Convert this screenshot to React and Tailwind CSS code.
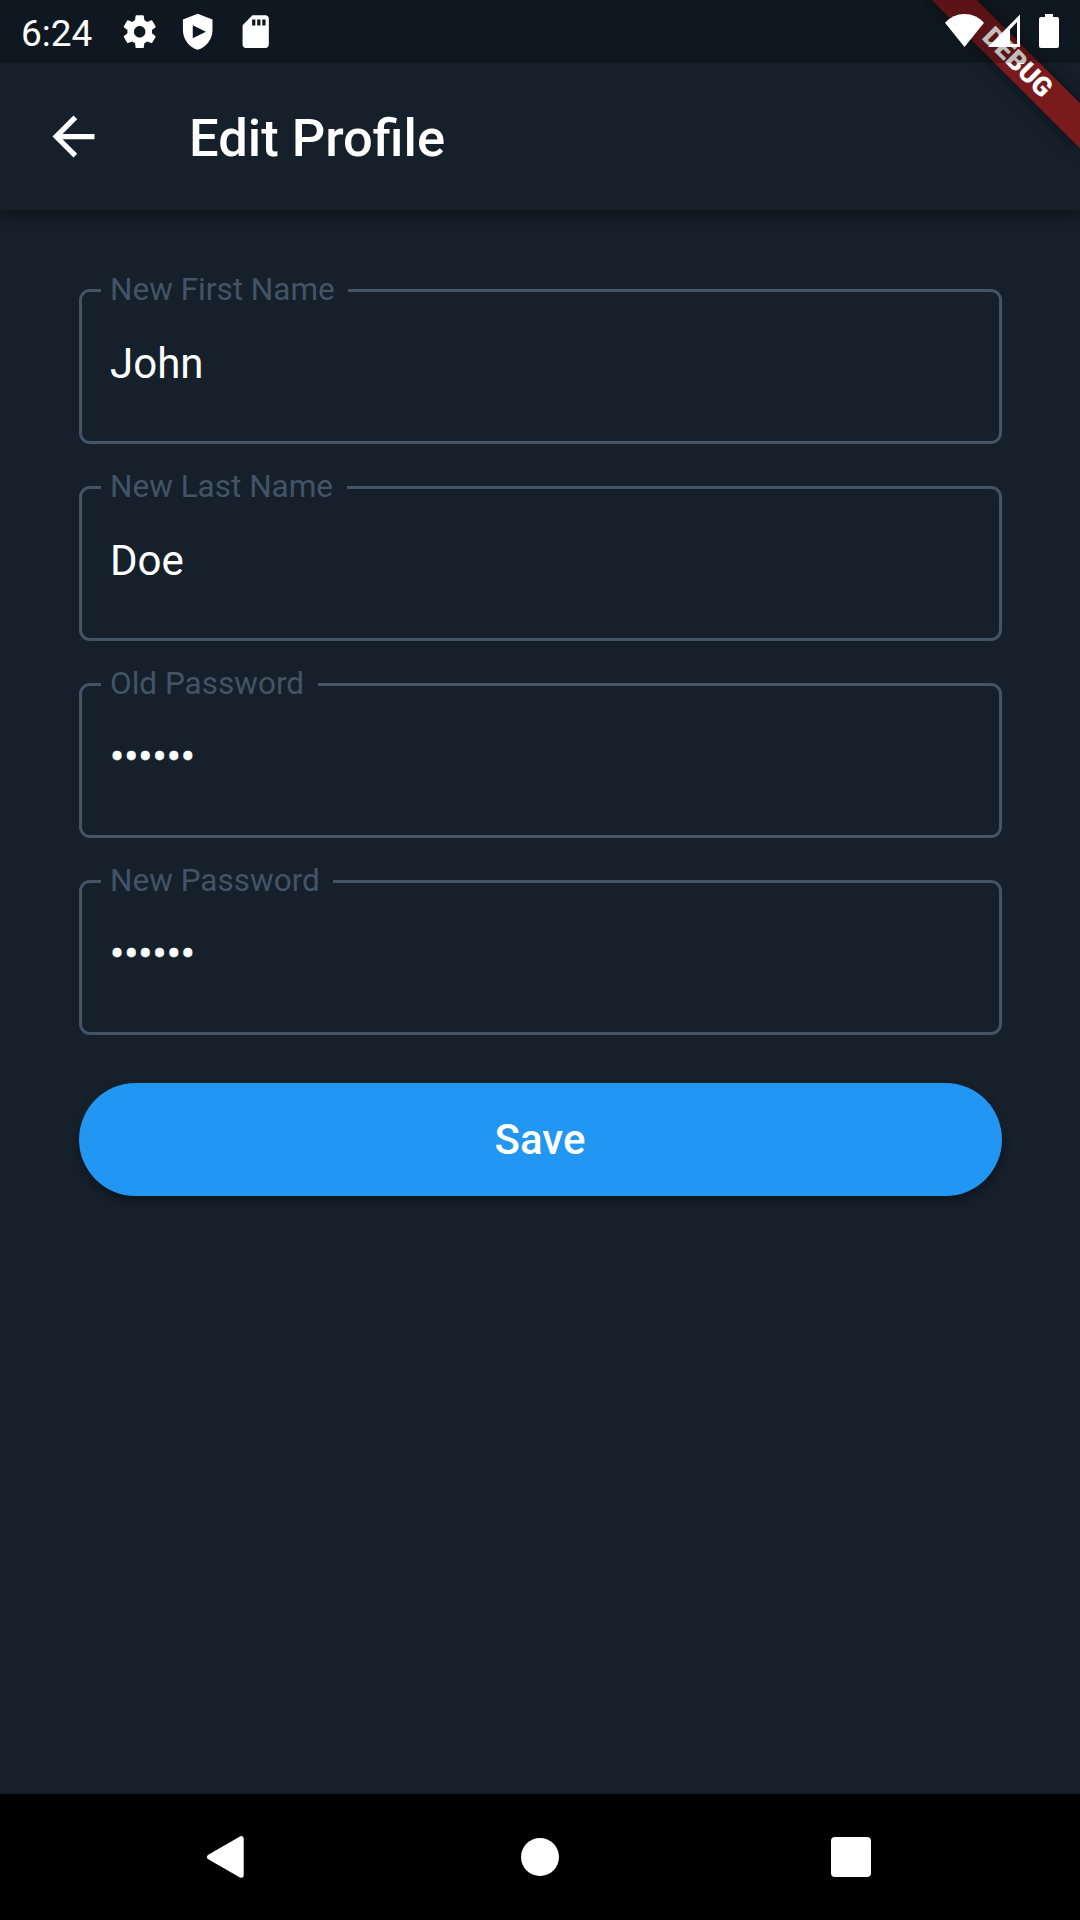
import React from "react";

const fields = [
  { label: "New First Name", value: "John" },
  { label: "New Last Name", value: "Doe" },
  { label: "Old Password", value: "••••••", secret: true },
  { label: "New Password", value: "••••••", secret: true },
];

function StatusIcon({ d, className = "" }) {
  return (
    <svg viewBox="0 0 24 24" fill="currentColor" className={`h-[39.4px] w-[39.4px] ${className}`}>
      <path fillRule="evenodd" d={d} />
    </svg>
  );
}

function StatusBar() {
  return (
    <div className="absolute inset-x-0 top-0 z-20 flex h-[63px] items-center bg-black/25 pl-[21px] pr-[19px]">
      <span className="relative top-[2px] w-[99px] text-[37px] leading-none">6:24</span>
      <StatusIcon d="M19.43 12.98c.04-.32.07-.64.07-.98s-.03-.66-.07-.98l2.11-1.65c.19-.15.24-.42.12-.64l-2-3.46c-.12-.22-.39-.3-.61-.22l-2.49 1c-.52-.4-1.08-.73-1.69-.98l-.38-2.65C14.46 2.18 14.25 2 14 2h-4c-.25 0-.46.18-.49.42l-.38 2.65c-.61.25-1.17.59-1.69.98l-2.49-1c-.23-.09-.49 0-.61.22l-2 3.46c-.13.22-.07.49.12.64l2.11 1.65c-.04.32-.07.65-.07.98s.03.66.07.98l-2.11 1.65c-.19.15-.24.42-.12.64l2 3.46c.12.22.39.3.61.22l2.49-1c.52.4 1.08.73 1.69.98l.38 2.65c.03.24.24.42.49.42h4c.25 0 .46-.18.49-.42l.38-2.65c.61-.25 1.17-.59 1.69-.98l2.49 1c.23.09.49 0 .61-.22l2-3.46c.12-.22.07-.49-.12-.64l-2.11-1.65zM12 15.5c-1.93 0-3.5-1.57-3.5-3.5s1.57-3.5 3.5-3.5 3.5 1.57 3.5 3.5-1.57 3.5-3.5 3.5z" />
      <StatusIcon className="ml-[18.8px]" d="M12 1 3 4.6V11c0 5.55 3.84 10.74 9 12 5.16-1.26 9-6.45 9-12V4.6zM9 8v8l8-4z" />
      <StatusIcon className="ml-[18px]" d="M18 2h-8L4.02 8 4 20c0 1.1.9 2 2 2h12c1.1 0 2-.9 2-2V4c0-1.1-.9-2-2-2zm-6.2 6.2h-2V4.6h2v3.6zm3.1 0h-2V4.6h2v3.6zm3.1 0h-2V4.6h2v3.6z" />
      <svg viewBox="943 0 118 63" fill="currentColor" className="ml-auto h-[63px] w-[118px]">
        <path d="M945 22.8Q953 14 964.5 14T984 22.8L964.5 47z" />
        <path fillRule="evenodd" d="M988 47 1020 14.5V47zM1010 29.5V44H1017V22z" />
        <path d="M1045 14h8v3h4q2 0 2 2v27q0 2-2 2h-16q-2 0-2-2V19q0-2 2-2h4z" />
      </svg>
    </div>
  );
}

function DebugBanner() {
  return (
    <div className="pointer-events-none absolute right-0 top-0 z-10 h-[240px] w-[240px] overflow-hidden">
      <div className="absolute left-[135px] top-[73px] flex h-[31.5px] w-[210px] origin-[105px_-73px] rotate-45 items-center justify-center bg-[#7a1a1c] shadow-[0_0_16px_rgba(0,0,0,0.5)]">
        <span className="text-[26.8px] font-black leading-none">DEBUG</span>
      </div>
    </div>
  );
}

function Field({ label, value, secret }) {
  return (
    <fieldset className="h-[174px] rounded-[11px] border-[3px] border-[#425466] pl-[28px]">
      <legend className="ml-[-9px] h-[41px] pl-[9px] pr-[13.5px] text-[31.5px] leading-[40px] text-[#425466]">
        {label}
      </legend>
      <div
        className={
          secret
            ? "mt-[27px] text-[42px] leading-[50px] [-webkit-text-stroke:0.5px_white]"
            : "mt-[28px] text-[42px] leading-[50px]"
        }
      >
        {value}
      </div>
    </fieldset>
  );
}

export default function App() {
  return (
    <div className="relative flex h-[1920px] w-[1080px] flex-col overflow-hidden bg-[#15202b] font-[Roboto,sans-serif] text-white">
      <StatusBar />
      <DebugBanner />
      <header className="flex h-[210px] shrink-0 items-center bg-[#15202b] pl-[42px] pt-[63px] shadow-[0_6px_12px_rgba(0,0,0,0.35)]">
        <svg viewBox="0 0 24 24" fill="currentColor" className="h-[63px] w-[63px]">
          <path d="M20 11H7.83l5.59-5.59L12 4l-8 8 8 8 1.41-1.41L7.83 13H20v-2z" />
        </svg>
        <h1 className="ml-[84px] pt-[4px] text-[52.5px] font-medium leading-none">Edit Profile</h1>
      </header>
      <main className="flex grow flex-col pl-[79px] pr-[78px] pt-[60px]">
        <div className="flex flex-col gap-[23px]">
          {fields.map((f) => (
            <Field key={f.label} {...f} />
          ))}
        </div>
        <button className="mt-[48px] h-[113px] rounded-full bg-[#2196f3] pr-[1px] text-[42px] font-medium shadow-[0_5px_8px_rgba(0,0,0,0.35)]">
          Save
        </button>
      </main>
      <nav className="flex h-[126px] shrink-0 items-center bg-black pl-[206px]">
        <svg viewBox="0 0 38 44" className="h-[44px] w-[38px]" fill="white" stroke="white" strokeWidth="5" strokeLinejoin="round">
          <path d="M3.5 22 35.2 3.7V40.3z" />
        </svg>
        <div className="ml-[276.5px] h-[38.6px] w-[38.6px] rounded-full bg-white" />
        <div className="ml-[271.9px] h-[40px] w-[40px] rounded-[4px] bg-white" />
      </nav>
    </div>
  );
}
